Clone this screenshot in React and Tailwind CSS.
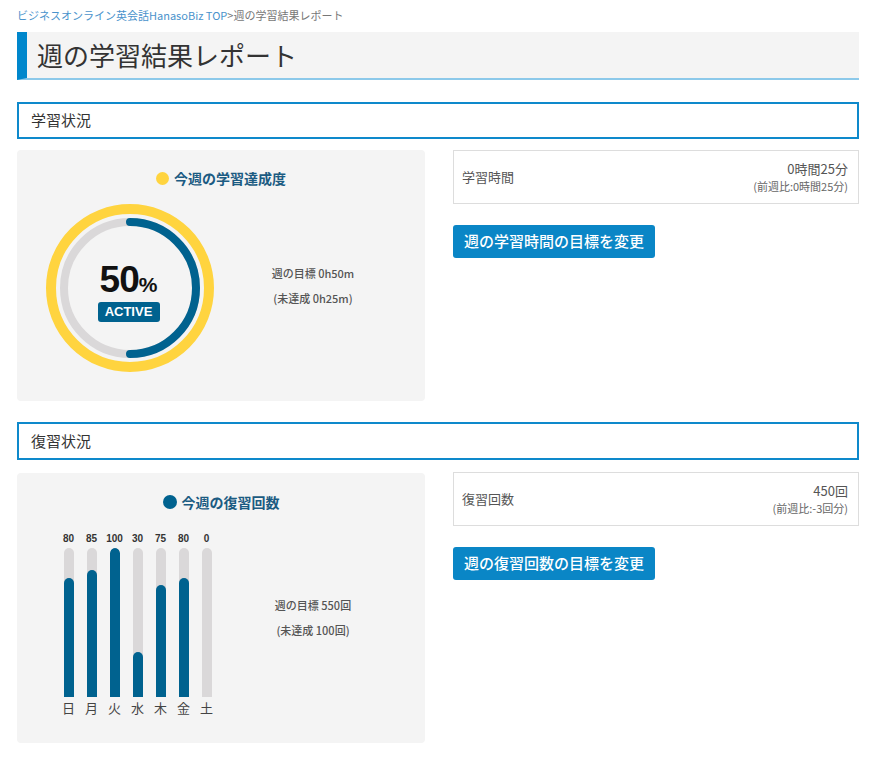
import React from "react";

const jp = { fontFamily: '"Noto Sans CJK JP", "Open Sans", sans-serif' };
const ar = { fontFamily: '"Liberation Sans", "Noto Sans CJK JP", sans-serif' };

function SectionTitle({ children }) {
  return (
    <div className="h-[37px] border-2 border-[#0e89cb] flex items-center pl-[12px] text-[15px] text-[#333]">
      {children}
    </div>
  );
}

function Stats({ label, value, sub }) {
  return (
    <div className="h-[54px] border border-[#dddddd] bg-white flex items-center justify-between pl-[8px] pr-[10px]">
      <div className="text-[13px] text-[#555]">{label}</div>
      <div className="flex flex-col items-end">
        <div className="text-[13px] leading-[18px] text-[#555]">{value}</div>
        <div className="text-[11px] leading-[16px] text-[#666]">{sub}</div>
      </div>
    </div>
  );
}

function Button({ children }) {
  return (
    <button className="mt-[21px] h-[33px] w-[202px] rounded-[3px] bg-[#0a86c6] text-white text-[15px] font-medium flex items-center justify-center">
      {children}
    </button>
  );
}

function Ring() {
  const r = 66;
  return (
    <svg width="170" height="170" viewBox="0 0 170 170" className="block">
      <circle cx="85" cy="85" r="79" fill="none" stroke="#ffd43f" strokeWidth="10" />
      <circle cx="85" cy="85" r={r} fill="none" stroke="#dad8d9" strokeWidth="8" />
      <path d={`M85 ${85 - r} A ${r} ${r} 0 0 1 85 ${85 + r}`} fill="none" stroke="#00628f" strokeWidth="8" strokeLinecap="round" />
    </svg>
  );
}

const bars = [
  ["日", 80],
  ["月", 85],
  ["火", 100],
  ["水", 30],
  ["木", 75],
  ["金", 80],
  ["土", 0],
];

export default function App() {
  return (
    <div className="w-[874px] min-h-[759px] bg-white" style={jp}>
      <div className="ml-[17px] w-[842px]">
        <div className="pt-[8px] text-[11px] leading-[14px] text-[#777]">
          <span className="text-[#4a93cc]">ビジネスオンライン英会話HanasoBiz TOP</span>
          <span>&gt;週の学習結果レポート</span>
        </div>

        <div className="mt-[10px] h-[48px] bg-[#f4f4f4] border-l-[10px] border-l-[#0087cc] border-b-2 border-b-[#8cc9ea] flex items-center pl-[10px]">
          <h1 className="text-[26px] text-[#333] leading-none">週の学習結果レポート</h1>
        </div>

        <div className="mt-[22px]">
          <SectionTitle>学習状況</SectionTitle>
        </div>

        <div className="mt-[11px] grid grid-cols-[408px_406px] gap-[28px] items-start">
          <div className="h-[251px] bg-[#f4f4f4] rounded-[4px] pt-[18px]">
            <div className="flex items-center justify-center gap-[5px] h-[20px]">
              <span className="w-[13px] h-[13px] rounded-full bg-[#ffd43f]" />
              <span className="text-[14px] font-bold text-[#1b5b82]">今週の学習達成度</span>
            </div>
            <div className="mt-[15px] flex items-start">
              <div className="ml-[28px] relative w-[170px] h-[170px]">
                <Ring />
                <div className="absolute inset-0 flex flex-col items-center justify-center pt-[6px] pr-[3px]" style={ar}>
                  <div className="flex items-baseline leading-none text-[#111] font-bold">
                    <span className="text-[37px] tracking-[-1px]">50</span>
                    <span className="text-[21px]">%</span>
                  </div>
                  <div className="mt-[4px] h-[20px] w-[62px] rounded-[3px] bg-[#00628f] text-white text-[13px] font-bold flex items-center justify-center">
                    ACTIVE
                  </div>
                </div>
              </div>
              <div className="ml-[23px] w-[150px] mt-[63px] text-center text-[11px] leading-[14px] text-[#555] font-medium">
                <div>週の目標 0h50m</div>
                <div className="mt-[11px]">(未達成 0h25m)</div>
              </div>
            </div>
          </div>

          <div className="flex flex-col items-start">
            <div className="w-full">
              <Stats label="学習時間" value="0時間25分" sub="(前週比:0時間25分)" />
            </div>
            <Button>週の学習時間の目標を変更</Button>
          </div>
        </div>

        <div className="mt-[21px]">
          <div className="h-[38px] border-2 border-[#0e89cb] flex items-center pl-[12px] text-[15px] text-[#333]">復習状況</div>
        </div>

        <div className="mt-[12px] grid grid-cols-[408px_406px] gap-[28px] items-start">
          <div className="mt-[1px] h-[270px] bg-[#f4f4f4] rounded-[4px] pt-[19px]">
            <div className="flex items-center justify-center gap-[5px] h-[20px]">
              <span className="w-[14px] h-[14px] rounded-full bg-[#00628f]" />
              <span className="text-[14px] font-bold text-[#1b5b82]">今週の復習回数</span>
            </div>
            <div className="mt-[21px] flex items-start">
              <div className="ml-[40px] flex">
                {bars.map(([d, v]) => (
                  <div key={d} className="w-[23px] flex flex-col items-center">
                    <div className="text-[10px] leading-[12px] text-[#333] font-bold" style={ar}>{v}</div>
                    <div className="mt-[3px] w-[10px] h-[149px] bg-[#dad8d9] rounded-t-full flex flex-col justify-end overflow-hidden">
                      {v > 0 && (
                        <div className="w-full bg-[#00628f] rounded-t-full" style={{ height: `${(v / 100) * 149}px` }} />
                      )}
                    </div>
                    <div className="mt-[3px] text-[13px] leading-[16px] text-[#444]">{d}</div>
                  </div>
                ))}
              </div>
              <div className="ml-[20px] w-[150px] mt-[65px] text-center text-[11px] leading-[14px] text-[#555] font-medium">
                <div>週の目標 550回</div>
                <div className="mt-[11px]">(未達成 100回)</div>
              </div>
            </div>
          </div>

          <div className="flex flex-col items-start">
            <div className="w-full">
              <Stats label="復習回数" value="450回" sub="(前週比:-3回分)" />
            </div>
            <Button>週の復習回数の目標を変更</Button>
          </div>
        </div>
      </div>
    </div>
  );
}
